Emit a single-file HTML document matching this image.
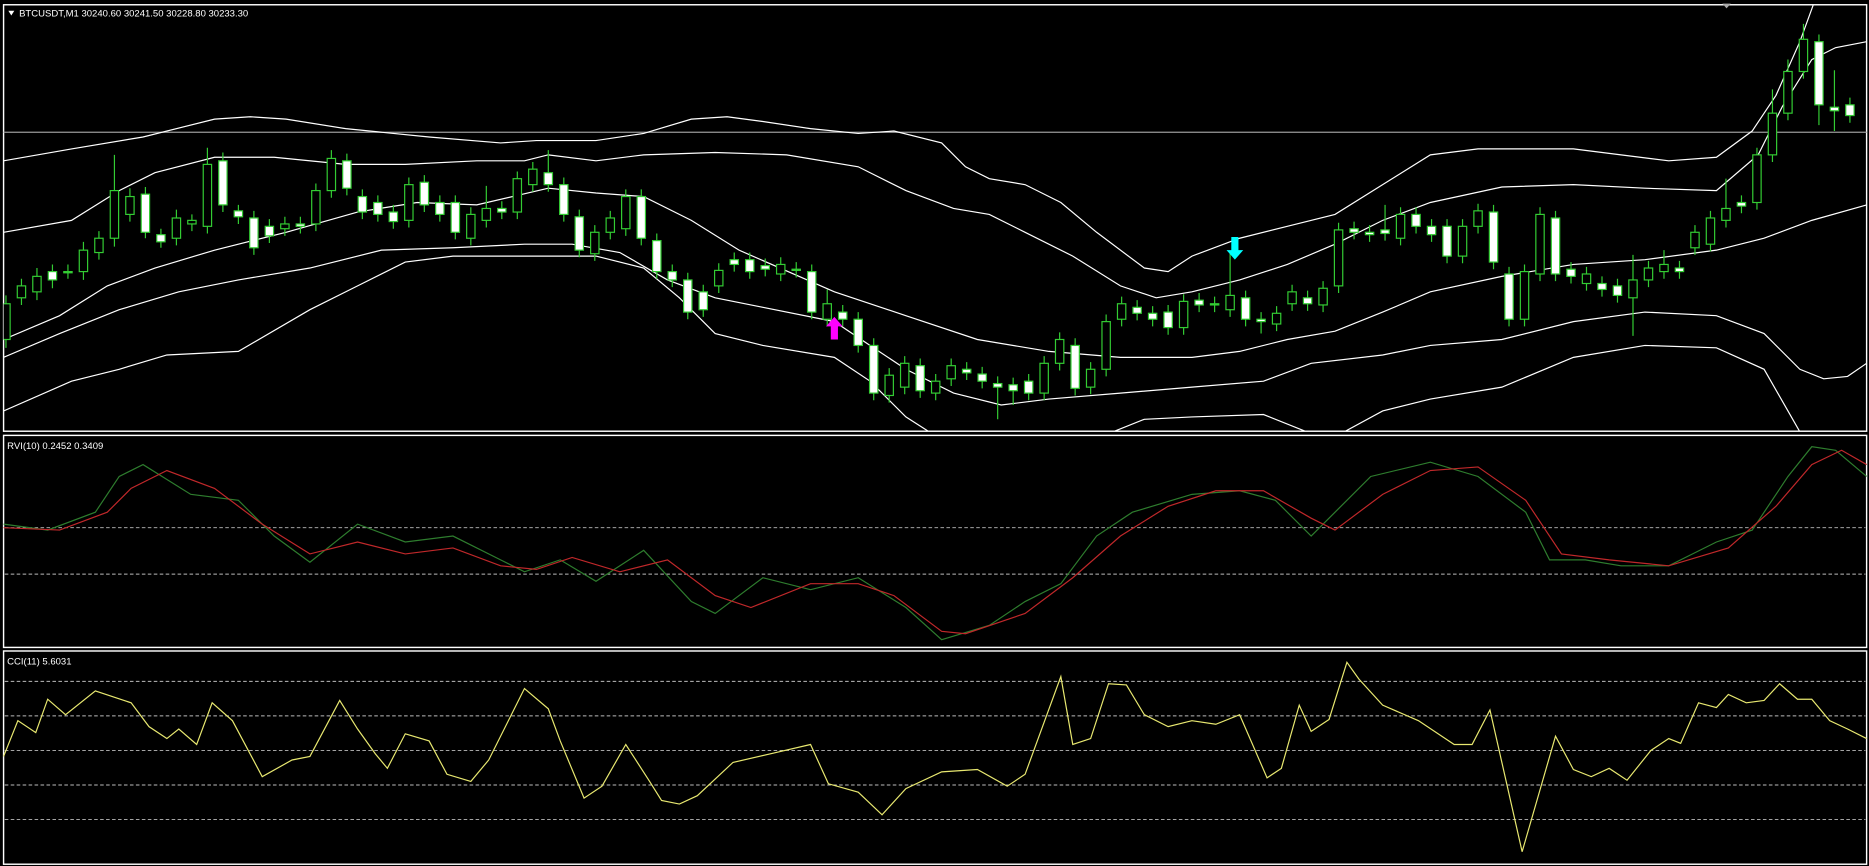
<!DOCTYPE html>
<html><head><meta charset="utf-8"><style>
html,body{margin:0;padding:0;background:#000;width:1869px;height:866px;overflow:hidden}
svg{display:block}
text{font-family:"Liberation Sans",sans-serif;font-size:8px;fill:#fff}
</style></head><body>
<svg width="1869" height="866" viewBox="0 0 1568 727" preserveAspectRatio="none">
<rect width="1568" height="727" fill="#000"/>
<g fill="none" stroke="#fff" stroke-width="1.2">
<rect x="3" y="4" width="1563" height="358"/>
<rect x="3" y="365.5" width="1563" height="178"/>
<rect x="3" y="546.5" width="1563" height="179"/>
</g>
<line x1="3" y1="111" x2="1566" y2="111" stroke="#999" stroke-width="1"/>
<polygon points="1445,3 1452,3 1448.5,7" fill="#aaa"/>
<polygon points="7,9 12,9 9.5,13" fill="#fff"/>
<text x="16" y="14">BTCUSDT,M1  30240.60 30241.50 30228.80 30233.30</text>
<text x="6" y="377">RVI(10) 0.2452 0.3409</text>
<text x="6" y="558">CCI(11) 5.6031</text>
<svg x="3" y="4" width="1563" height="358" viewBox="3 4 1563 358" overflow="hidden">
<g fill="none" stroke="#fff" stroke-width="1">
<polyline points="3,135 60,125 120,115 180,100 210,98 240,100 290,108 360,115 420,120 450,118 500,118 540,112 580,100 610,98 640,102 680,108 720,112 750,110 790,120 810,140 830,150 860,155 890,170 920,195 960,225 980,228 1000,215 1040,200 1080,190 1120,180 1160,155 1200,130 1240,125 1280,125 1320,125 1360,130 1400,135 1440,132 1470,110 1490,80 1510,35 1522,2"/>
<polyline points="3,195 60,185 100,160 130,145 180,132 230,132 290,138 340,138 400,135 440,135 460,130 500,135 540,130 600,128 660,130 720,140 760,160 800,175 830,180 860,195 900,215 940,240 970,250 1000,245 1040,235 1080,222 1120,205 1160,185 1200,170 1260,157 1320,155 1380,158 1440,160 1475,130 1495,90 1520,50 1540,40 1566,35"/>
<polyline points="3,285 50,265 90,240 130,225 180,210 240,195 300,178 350,170 400,172 460,158 500,162 540,165 580,185 620,210 700,245 760,265 820,285 880,295 940,300 1000,300 1040,295 1080,285 1120,278 1160,262 1200,245 1260,232 1320,222 1380,218 1440,210 1480,200 1520,185 1566,172"/>
<polyline points="3,300 50,280 100,260 150,245 200,235 260,225 320,210 380,208 440,205 480,205 520,212 560,235 600,250 640,258 700,270 730,290 760,310 800,330 840,340 880,335 940,330 1000,325 1060,320 1100,305 1160,298 1200,290 1260,285 1320,270 1380,262 1440,265 1480,280 1510,310 1530,318 1550,316 1566,305"/>
<polyline points="3,345 60,320 100,310 140,298 200,295 260,260 300,240 340,220 380,215 440,215 500,215 540,225 570,250 600,280 640,290 700,300 730,320 760,350 785,366"/>
<polyline points="925,366 960,352 1000,350 1060,348 1100,364"/>
<polyline points="1125,364 1160,345 1200,335 1260,325 1320,300 1380,290 1440,292 1480,310 1500,345 1512,366"/>
</g>
<g stroke="#3c3" stroke-width="1" fill="none">
<path d="M5,248V292M18,234V256M31,225V252M44,222V242M57,222V234M70,203V235M83,194V218M96,130V207M109,158V186M122,157V200M135,192V208M148,176V206M161,180V194M174,124V196M187,128V178M200,172V188M213,177V214M226,184V204M239,182V198M252,182V196M265,154V194M278,126V166M291,129V164M304,159V184M317,164V186M330,172V192M343,149V191M356,147V178M369,164V186M382,164V201M395,174V206M408,156V191M421,169V184M434,144V184M447,136V161M460,126V161M473,149V186M486,176V216M499,189V219M512,177V201M525,159V198M538,159V206M551,196V234M564,222V241M577,229V268M590,239V266M603,221V246M616,212V228M629,212V234M642,217V232M655,216V236M668,220V233M681,222V268M694,243V274M707,256V274M720,262V296M733,284V336M746,309V338M759,299V331M772,301V334M785,314V336M798,301V324M811,304V319M824,308V326M837,316V352M850,317V340M863,314V336M876,299V336M889,279V311M902,284V332M915,304V331M928,264V316M941,249V274M954,252V269M967,257V274M980,256V281M993,247V281M1006,246V262M1019,249V262M1032,212V266M1045,244V274M1058,262V280M1071,257V278M1084,239V261M1097,244V261M1110,236V262M1123,187V246M1136,186V201M1149,189V203M1162,172V202M1175,174V206M1188,174V196M1201,184V203M1214,184V221M1227,184V221M1240,171V196M1253,172V226M1266,224V274M1279,222V274M1292,174V236M1305,177V236M1318,220V238M1331,224V244M1344,232V249M1357,234V254M1370,214V282M1383,219V241M1396,210V234M1409,219V234M1422,189V214M1435,177V211M1448,150V191M1461,164V179M1474,124V176M1487,75V136M1500,50V101M1513,20V66M1526,29V105M1539,59V110M1552,82V103"/>
</g>
<g stroke="#3c3" stroke-width="1">
<g fill="#000">
<rect x="1.5" y="255" width="7" height="30"/><rect x="14.5" y="240" width="7" height="10"/><rect x="27.5" y="232" width="7" height="13"/><rect x="53.5" y="228" width="7" height="1"/><rect x="66.5" y="210" width="7" height="18"/><rect x="79.5" y="200" width="7" height="12"/><rect x="92.5" y="160" width="7" height="40"/><rect x="105.5" y="165" width="7" height="15"/><rect x="144.5" y="183" width="7" height="17"/><rect x="157.5" y="185" width="7" height="3"/><rect x="170.5" y="138" width="7" height="52"/><rect x="235.5" y="188" width="7" height="4"/><rect x="261.5" y="160" width="7" height="28"/><rect x="274.5" y="133" width="7" height="27"/><rect x="339.5" y="155" width="7" height="30"/><rect x="391.5" y="180" width="7" height="20"/><rect x="404.5" y="175" width="7" height="10"/><rect x="430.5" y="150" width="7" height="28"/><rect x="443.5" y="142" width="7" height="13"/><rect x="495.5" y="195" width="7" height="18"/><rect x="508.5" y="183" width="7" height="12"/><rect x="521.5" y="165" width="7" height="27"/><rect x="599.5" y="227" width="7" height="13"/><rect x="651.5" y="222" width="7" height="8"/><rect x="690.5" y="255" width="7" height="13"/><rect x="742.5" y="315" width="7" height="17"/><rect x="755.5" y="305" width="7" height="20"/><rect x="781.5" y="320" width="7" height="10"/><rect x="794.5" y="307" width="7" height="11"/><rect x="872.5" y="305" width="7" height="25"/><rect x="885.5" y="285" width="7" height="20"/><rect x="911.5" y="310" width="7" height="15"/><rect x="924.5" y="270" width="7" height="40"/><rect x="937.5" y="255" width="7" height="13"/><rect x="989.5" y="253" width="7" height="22"/><rect x="1028.5" y="248" width="7" height="12"/><rect x="1067.5" y="263" width="7" height="9"/><rect x="1080.5" y="245" width="7" height="10"/><rect x="1106.5" y="242" width="7" height="14"/><rect x="1119.5" y="193" width="7" height="47"/><rect x="1171.5" y="180" width="7" height="20"/><rect x="1223.5" y="190" width="7" height="25"/><rect x="1236.5" y="177" width="7" height="13"/><rect x="1275.5" y="228" width="7" height="40"/><rect x="1288.5" y="180" width="7" height="50"/><rect x="1327.5" y="230" width="7" height="8"/><rect x="1366.5" y="235" width="7" height="15"/><rect x="1379.5" y="225" width="7" height="10"/><rect x="1392.5" y="222" width="7" height="6"/><rect x="1418.5" y="195" width="7" height="13"/><rect x="1431.5" y="183" width="7" height="22"/><rect x="1444.5" y="175" width="7" height="10"/><rect x="1470.5" y="130" width="7" height="40"/><rect x="1483.5" y="95" width="7" height="35"/><rect x="1496.5" y="60" width="7" height="35"/><rect x="1509.5" y="33" width="7" height="27"/>
</g>
<g fill="#fff">
<rect x="40.5" y="228" width="7" height="7"/><rect x="118.5" y="163" width="7" height="32"/><rect x="131.5" y="197" width="7" height="6"/><rect x="183.5" y="135" width="7" height="37"/><rect x="196.5" y="177" width="7" height="5"/><rect x="209.5" y="183" width="7" height="25"/><rect x="222.5" y="190" width="7" height="8"/><rect x="248.5" y="188" width="7" height="2"/><rect x="287.5" y="135" width="7" height="23"/><rect x="300.5" y="165" width="7" height="13"/><rect x="313.5" y="170" width="7" height="10"/><rect x="326.5" y="178" width="7" height="8"/><rect x="352.5" y="153" width="7" height="19"/><rect x="365.5" y="170" width="7" height="10"/><rect x="378.5" y="170" width="7" height="25"/><rect x="417.5" y="175" width="7" height="3"/><rect x="456.5" y="145" width="7" height="10"/><rect x="469.5" y="155" width="7" height="25"/><rect x="482.5" y="182" width="7" height="28"/><rect x="534.5" y="165" width="7" height="35"/><rect x="547.5" y="202" width="7" height="26"/><rect x="560.5" y="228" width="7" height="7"/><rect x="573.5" y="235" width="7" height="27"/><rect x="586.5" y="245" width="7" height="15"/><rect x="612.5" y="218" width="7" height="4"/><rect x="625.5" y="218" width="7" height="10"/><rect x="638.5" y="223" width="7" height="3"/><rect x="664.5" y="226" width="7" height="1"/><rect x="677.5" y="228" width="7" height="34"/><rect x="703.5" y="262" width="7" height="6"/><rect x="716.5" y="268" width="7" height="22"/><rect x="729.5" y="290" width="7" height="40"/><rect x="768.5" y="307" width="7" height="21"/><rect x="807.5" y="310" width="7" height="3"/><rect x="820.5" y="314" width="7" height="6"/><rect x="833.5" y="322" width="7" height="3"/><rect x="846.5" y="323" width="7" height="5"/><rect x="859.5" y="320" width="7" height="10"/><rect x="898.5" y="290" width="7" height="36"/><rect x="950.5" y="258" width="7" height="5"/><rect x="963.5" y="263" width="7" height="5"/><rect x="976.5" y="262" width="7" height="13"/><rect x="1002.5" y="252" width="7" height="4"/><rect x="1015.5" y="255" width="7" height="1"/><rect x="1041.5" y="250" width="7" height="18"/><rect x="1054.5" y="268" width="7" height="2"/><rect x="1093.5" y="250" width="7" height="5"/><rect x="1132.5" y="192" width="7" height="3"/><rect x="1145.5" y="195" width="7" height="2"/><rect x="1158.5" y="193" width="7" height="3"/><rect x="1184.5" y="180" width="7" height="10"/><rect x="1197.5" y="190" width="7" height="7"/><rect x="1210.5" y="190" width="7" height="25"/><rect x="1249.5" y="178" width="7" height="42"/><rect x="1262.5" y="230" width="7" height="38"/><rect x="1301.5" y="183" width="7" height="47"/><rect x="1314.5" y="226" width="7" height="6"/><rect x="1340.5" y="238" width="7" height="5"/><rect x="1353.5" y="240" width="7" height="8"/><rect x="1405.5" y="225" width="7" height="3"/><rect x="1457.5" y="170" width="7" height="3"/><rect x="1522.5" y="35" width="7" height="53"/><rect x="1535.5" y="90" width="7" height="3"/><rect x="1548.5" y="88" width="7" height="9"/>
</g>
</g>
<path d="M700,266 L707,274 L703,274 L703,285 L697,285 L697,274 L693,274 Z" fill="#f0f"/>
<path d="M1036,218 L1043,210 L1039,210 L1039,199 L1033,199 L1033,210 L1029,210 Z" fill="#0ff"/>
</svg>
<g stroke="#bbb" stroke-width="0.8" stroke-dasharray="3,2">
<line x1="4" y1="443" x2="1565" y2="443"/><line x1="4" y1="482" x2="1565" y2="482"/>
<line x1="4" y1="572" x2="1565" y2="572"/><line x1="4" y1="601" x2="1565" y2="601"/><line x1="4" y1="630" x2="1565" y2="630"/><line x1="4" y1="659" x2="1565" y2="659"/><line x1="4" y1="688" x2="1565" y2="688"/>
</g>
<polyline fill="none" stroke="#2e7d2e" stroke-width="1" points="3,440 40,445 80,430 100,400 120,390 160,415 200,420 230,450 260,472 300,440 340,455 380,450 420,470 440,480 470,470 500,488 540,462 580,505 600,515 640,485 680,495 720,485 760,510 790,537 830,525 860,505 890,490 920,450 950,430 1000,415 1040,412 1070,420 1100,450 1150,400 1200,388 1240,400 1280,430 1300,470 1330,470 1360,475 1400,475 1440,455 1470,445 1500,400 1520,375 1540,378 1566,400"/>
<polyline fill="none" stroke="#c0282a" stroke-width="1" points="3,443 50,445 90,430 110,410 140,395 180,410 220,440 260,465 300,455 340,465 380,460 420,475 450,478 480,468 520,480 560,470 600,500 630,510 680,490 720,490 750,500 790,530 810,532 860,515 900,485 940,450 980,425 1020,412 1060,412 1100,435 1120,445 1160,415 1200,395 1240,392 1280,420 1310,465 1350,470 1400,475 1450,460 1490,425 1520,390 1545,378 1566,390"/>
<polyline fill="none" stroke="#e8e870" stroke-width="1" points="3,635 15,605 30,615 40,587 55,600 80,580 110,590 125,610 140,620 150,612 165,625 178,590 195,605 220,652 245,638 260,635 285,588 300,612 315,633 325,645 340,616 360,622 375,650 395,656 410,638 440,578 460,595 470,622 490,670 505,660 525,625 545,656 555,672 570,675 585,668 615,640 650,632 680,625 695,658 720,665 740,684 760,662 790,648 820,646 845,660 860,650 890,568 900,625 915,620 930,574 945,575 960,600 980,610 1000,605 1020,608 1040,600 1063,653 1075,645 1090,592 1100,614 1115,604 1130,556 1140,570 1160,592 1190,605 1220,625 1235,625 1250,596 1277,715 1305,618 1320,646 1335,652 1350,645 1365,655 1385,630 1400,620 1410,624 1425,590 1440,594 1450,583 1465,590 1480,588 1493,574 1508,587 1520,587 1535,605 1550,612 1566,620"/>
</svg>
</body></html>
